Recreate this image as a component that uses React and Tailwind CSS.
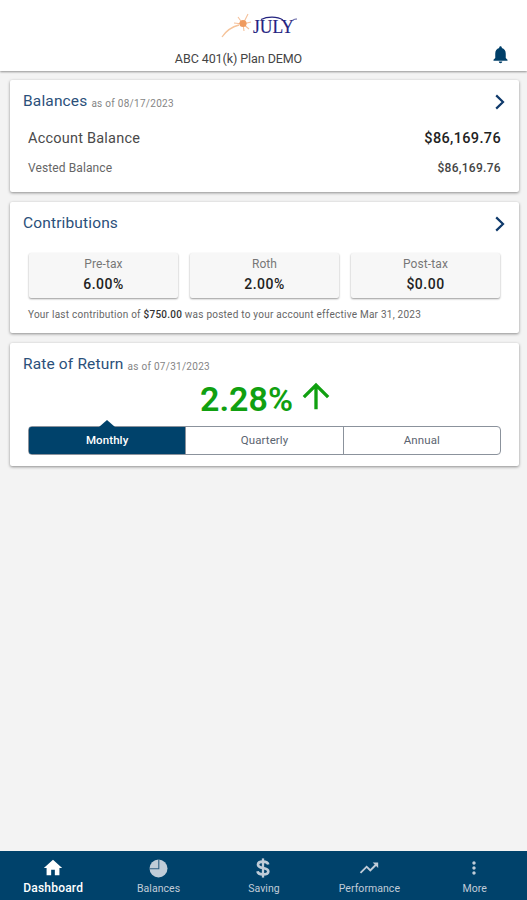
import { useState } from 'react';
import { MdArrowUpward, MdHome, MdMoreVert, MdNotifications, MdTrendingUp } from 'react-icons/md';

const contributions = [
  { label: 'Pre-tax', value: '6.00%' },
  { label: 'Roth', value: '2.00%' },
  { label: 'Post-tax', value: '$0.00' }
];

const periods = ['Monthly', 'Quarterly', 'Annual'];

function Logo() {
  return (
    <svg width="78" height="30" viewBox="0 0 78 30" role="img" aria-label="July">
      <path d="M1 26 C5 20 10 16 18 14" fill="none" stroke="#f5c39a" strokeWidth="1.3" />
      <g stroke="#f5c09a" strokeWidth="1.1">
        <path d="M22 13 L17 6 M22 13 L27 3 M22 13 L30 11 M22 13 L28 18 M22 13 L23 20 M22 13 L13 12" />
      </g>
      <circle cx="22" cy="12.5" r="3.6" fill="#ef9a5e" />
      <text x="32" y="22" fill="#23237f" stroke="#23237f" strokeWidth="0.2" fontFamily="'Liberation Serif', serif" fontSize="19" textLength="41" lengthAdjust="spacingAndGlyphs">
        JULY
      </text>
      <path d="M40 8.5 C46 5.500 56 5 62 9" fill="none" stroke="#23237f" strokeWidth="1.2" />
      <path d="M70 11 C71 9 73 8 76 8" fill="none" stroke="#5c5ca0" strokeWidth="1" />
    </svg>
  );
}

function Chevron() {
  return (
    <svg width="10" height="16" viewBox="0 0 10 16" fill="none" stroke="#0f3a6b" strokeWidth="2.2">
      <path d="M1.2 1.4 L8 8 L1.2 14.6" />
    </svg>
  );
}

function PieIcon() {
  return (
    <svg width="20" height="20" viewBox="0 0 20 20" fill="currentColor">
      <circle cx="10.5" cy="10.5" r="9" />
      <path d="M1 10.8 H10.8 V1" fill="none" stroke="#2f5f82" strokeWidth="1.1" />
    </svg>
  );
}

function DollarIcon() {
  return (
    <svg width="16" height="20" viewBox="0 0 16 20" fill="none" stroke="currentColor" strokeWidth="2.7">
      <path d="M13.2 6.6 C12.8 4.6 10.8 3.7 8 3.700 C5 3.7 3 4.7 3 6.700 C3 8.9 5 9.4 8 10 C11.200 10.6 13.300 11.3 13.300 13.4 C13.300 15.4 11 16.300 8 16.300 C5 16.3 2.8 15.300 2.5 13.200" />
      <path d="M8 0.4 V19.6" strokeWidth="2.3" />
    </svg>
  );
}

function Card({ title, asOf, className, children }) {
  return (
    <section className={`ml-[10px] mr-[8px] rounded-[2px] bg-white shadow-[0_1px_3px_rgba(0,0,0,0.42)] ${className}`}>
      <h2 className="flex h-[43px] items-center px-[13px] text-[15.5px] tracking-[0.15px] text-[#2b507a]">
        {title}
        {asOf && <span className="ml-[4px] mt-[3px] text-[10px] tracking-[0.28px] text-[#858585]">as of {asOf}</span>}
      </h2>
      {children}
    </section>
  );
}

function App() {
  const [period, setPeriod] = useState('Monthly');

  const tabs = [
    { label: 'Dashboard', icon: <MdHome size={22} /> },
    { label: 'Balances', icon: <PieIcon /> },
    { label: 'Saving', icon: <DollarIcon /> },
    { label: 'Performance', icon: <MdTrendingUp size={22} /> },
    { label: 'More', icon: <MdMoreVert size={20} /> }
  ];

  return (
    <div className="flex h-[900px] w-[527px] flex-col bg-[#f3f3f3] font-[Roboto,sans-serif] text-[#333]">
      {/* Header */}
      <header className="grid h-[71px] shrink-0 grid-cols-[50px_1fr_50px] bg-white shadow-[0_1px_2px_rgba(0,0,0,0.4)]">
        <div />
        <div className="flex flex-col items-center">
          <div className="mr-[8px] mt-[11px] h-[30px]">
            <Logo />
          </div>
          <h1 className="mr-[50px] mt-[9px] text-[12.5px] leading-[18px] tracking-[-0.08px] text-[#444]">ABC 401(k) Plan DEMO</h1>
        </div>
        <button className="mr-[3px] mt-[44px] flex h-[22px] justify-center text-[#003f69]" aria-label="Notifications">
          <MdNotifications size={21} />
        </button>
      </header>

      <main className="flex-grow">
        {/* Balances */}
        <div className="relative">
          <Card title="Balances" asOf="08/17/2023" className="mt-[9px] h-[112px]">
            <div className="flex h-[31px] items-center justify-between pl-[18px] pr-[18px] text-[14.5px]">
              <span className="tracking-[0.22px] text-[#4a4a4a]">Account Balance</span>
              <span className="font-medium tracking-[0.35px] text-[#222]">$86,169.76</span>
            </div>
            <div className="flex h-[27px] items-center justify-between pl-[18px] pr-[18px] text-[12px]">
              <span className="tracking-[0.1px] text-[#666]">Vested Balance</span>
              <span className="font-medium tracking-[0.3px] text-[#444]">$86,169.76</span>
            </div>
          </Card>
          <button className="absolute right-[22px] top-[14px]" aria-label="View balances"><Chevron /></button>
        </div>

        {/* Contributions */}
        <div className="relative">
          <Card title="Contributions" className="mt-[10px] h-[131px]">
            <div className="mt-[8px] grid grid-cols-3 gap-[12px] px-[19px]">
              {contributions.map((item) => (
                <div key={item.label} className="h-[45px] rounded-[2px] bg-[#f7f7f7] pt-[1px] text-center shadow-[0_1px_2px_rgba(0,0,0,0.4)]">
                  <div className="text-[12px] leading-[20px] tracking-[0.1px] text-[#777]">{item.label}</div>
                  <div className="text-[14px] font-medium leading-[21px] tracking-[0.5px] text-[#222]">{item.value}</div>
                </div>
              ))}
            </div>
            <p className="mt-[8px] whitespace-nowrap pl-[18px] text-[10px] leading-[18px] tracking-[0.24px] text-[#666]">
              Your last contribution of <b className="font-medium text-[#333]">$750.00</b> was posted to your account effective Mar 31, 2023
            </p>
          </Card>
          <button className="absolute right-[22px] top-[14px]" aria-label="View contributions"><Chevron /></button>
        </div>

        {/* Rate of return */}
        <Card title="Rate of Return" asOf="07/31/2023" className="mt-[10px] h-[123px]">
          <div className="-mt-[1px] ml-[7px] flex h-[28px] items-center justify-center gap-[3px] text-[#10a010]">
            <span className="-mt-[1px] text-[34px] font-semibold leading-none tracking-[0px]">2.28%</span>
            <MdArrowUpward size={40} className="-mt-[6px]" />
          </div>
          <div className="mx-[18px] mt-[13px] flex h-[29px] rounded-[4px] border border-[#8b929c]">
            {periods.map((name) => (
              <button
                key={name}
                onClick={() => setPeriod(name)}
                className={`relative flex-1 text-[11.5px] tracking-[0.1px] ${name === period ? 'rounded-l-[2px] bg-[#00426b] font-medium text-white' : 'border-l border-[#8b929c] text-[#5b6470]'}`}
              >
                {name === period && (
                  <span className="absolute -top-[7px] left-1/2 -translate-x-1/2 border-x-[8px] border-b-[7px] border-x-transparent border-b-[#00426b]" />
                )}
                {name}
              </button>
            ))}
          </div>
        </Card>
      </main>

      {/* Bottom tabs */}
      <nav className="grid h-[49px] shrink-0 grid-cols-5 bg-[#00426b]">
        {tabs.map((tab, index) => (
          <button key={tab.label} className={`flex flex-col items-center pt-[6px] ${index === 0 ? 'text-white' : 'text-[#c0ccd8]'}`}>
            <span className="flex h-[22px] items-center">{tab.icon}</span>
            <span className={index === 0 ? 'ml-[1px] text-[12px] font-medium leading-[18px] tracking-[0.2px]' : 'ml-[1px] mt-[1px] text-[10.5px] leading-[18px] tracking-[0.05px]'}>{tab.label}</span>
          </button>
        ))}
      </nav>
    </div>
  );
}

export default App;
